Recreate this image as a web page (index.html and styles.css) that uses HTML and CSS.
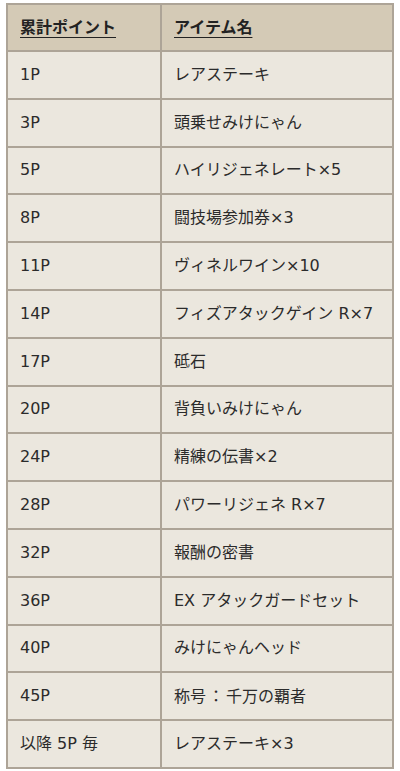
FILE: index.html
```html
<!DOCTYPE html>
<html lang="ja">
<head>
<meta charset="utf-8">
<link rel="stylesheet" href="styles.css">
</head>
<body>
<div class="wrap">
<table class="rewards">
<thead>
<tr><th class="c1"><span class="u">累計ポイント</span></th><th class="c2"><span class="u">アイテム名</span></th></tr>
</thead>
<tbody>
<tr><td>1P</td><td>レアステーキ</td></tr>
<tr><td>3P</td><td>頭乗せみけにゃん</td></tr>
<tr><td>5P</td><td>ハイリジェネレート×5</td></tr>
<tr><td>8P</td><td>闘技場参加券×3</td></tr>
<tr><td>11P</td><td>ヴィネルワイン×10</td></tr>
<tr><td>14P</td><td>フィズアタックゲイン R×7</td></tr>
<tr><td>17P</td><td>砥石</td></tr>
<tr><td>20P</td><td>背負いみけにゃん</td></tr>
<tr><td>24P</td><td>精練の伝書×2</td></tr>
<tr><td>28P</td><td>パワーリジェネ R×7</td></tr>
<tr><td>32P</td><td>報酬の密書</td></tr>
<tr><td>36P</td><td>EX アタックガードセット</td></tr>
<tr><td>40P</td><td>みけにゃんヘッド</td></tr>
<tr><td>45P</td><td>称号<span class="fw">：</span>千万の覇者</td></tr>
<tr><td>以降 5P 毎</td><td>レアステーキ×3</td></tr>
</tbody>
</table>
</div>
</body>
</html>
```

FILE: styles.css
```css
html, body {
  margin: 0;
  padding: 0;
  background: #ffffff;
}
.wrap {
  padding: 3px 0 0 6px;
}
.rewards {
  width: 388px;
  border-collapse: collapse;
  table-layout: fixed;
  font-family: "DejaVu Sans", "Noto Sans CJK JP", sans-serif;
  font-size: 16px;
  color: #2b2b2b;
  border: 2px solid #a39a8e;
}
.rewards th,
.rewards td {
  border: 2px solid #ada497;
  text-align: left;
  vertical-align: middle;
  padding: 0 0 0 12px;
  line-height: 20px;
}
.rewards th {
  background: #d4cab6;
  height: 45px;
  font-weight: bold;
  color: #222;
}
.rewards .c1 {
  width: 140px;
}
.rewards td {
  background: #ebe7de;
  height: 45.8px;
}
.u {
  text-decoration: underline;
  text-underline-offset: 4px;
  text-decoration-thickness: 1px;
}
.fw {
  font-family: "Noto Sans CJK JP", sans-serif;
  padding: 0 2px;
}
```
